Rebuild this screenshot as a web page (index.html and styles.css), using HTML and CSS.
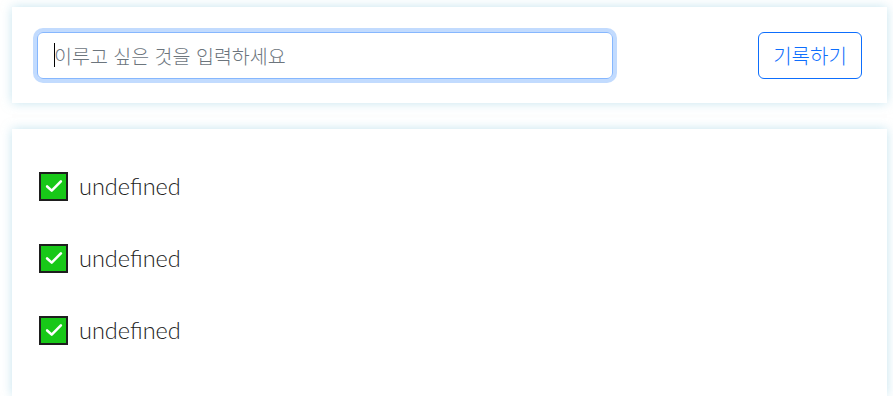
FILE: index.html
```html
<!DOCTYPE html>
<html lang="ko">
<head>
<meta charset="utf-8">
<link rel="stylesheet" href="styles.css">
</head>
<body>
<div class="page">
  <form class="card entry">
    <div class="field">
      <span class="caret"></span>
      <input class="goal-input" type="text" placeholder="이루고 싶은 것을 입력하세요">
    </div>
    <button class="save-btn" type="button">기록하기</button>
  </form>
  <div class="card list">
    <div class="item">
      <span class="check"><svg viewBox="0 0 24 24" width="22" height="22"><path d="M4.5 12.5l5 4.5 10-10" fill="none" stroke="#fff" stroke-width="2.8" stroke-linecap="round" stroke-linejoin="round"/></svg></span>
      <span class="label">undefined</span>
    </div>
    <div class="item">
      <span class="check"><svg viewBox="0 0 24 24" width="22" height="22"><path d="M4.5 12.5l5 4.5 10-10" fill="none" stroke="#fff" stroke-width="2.8" stroke-linecap="round" stroke-linejoin="round"/></svg></span>
      <span class="label">undefined</span>
    </div>
    <div class="item">
      <span class="check"><svg viewBox="0 0 24 24" width="22" height="22"><path d="M4.5 12.5l5 4.5 10-10" fill="none" stroke="#fff" stroke-width="2.8" stroke-linecap="round" stroke-linejoin="round"/></svg></span>
      <span class="label">undefined</span>
    </div>
  </div>
</div>
</body>
</html>
```
FILE: styles.css
```css
html, body {
  margin: 0;
  padding: 0;
  background: #fff;
}
body {
  font-family: "Noto Sans CJK KR", "Noto Sans", sans-serif;
}
.page {
  padding: 7px 6px 0 12px;
  display: flex;
  flex-direction: column;
  gap: 26px;
}
.card {
  background: #fff;
  box-shadow: 0 0 10px rgba(150, 205, 225, 0.55);
}
.entry {
  margin: 0;
  height: 96px;
  box-sizing: border-box;
  padding: 25px 25px 0 25px;
  display: flex;
  justify-content: space-between;
  align-items: flex-start;
}
.field {
  position: relative;
  width: 576px;
  height: 47px;
  box-sizing: border-box;
  border: 1px solid #86b7fe;
  border-radius: 6px;
  box-shadow: 0 0 0 4px rgba(13, 110, 253, 0.25);
  display: flex;
  align-items: center;
  padding-left: 16px;
}
.caret {
  position: absolute;
  left: 16px;
  top: 10px;
  width: 1px;
  height: 24px;
  background: #000;
}
.goal-input {
  border: 0;
  outline: none;
  padding: 0;
  width: 100%;
  font-family: "Noto Sans CJK KR", sans-serif;
  font-size: 19.5px;
  font-weight: 300;
  color: #212529;
  background: transparent;
}
.goal-input::placeholder {
  color: #6c757d;
}
.save-btn {
  width: 104px;
  height: 47px;
  border: 1px solid #0d6efd;
  border-radius: 6px;
  background: #fff;
  color: #0d6efd;
  font-family: "Noto Sans CJK KR", sans-serif;
  font-size: 20px;
  font-weight: 300;
  padding: 0;
}
.list {
  height: 267px;
  box-sizing: border-box;
  padding: 21px 27px 0 27px;
  display: flex;
  flex-direction: column;
}
.item {
  height: 72px;
  display: flex;
  align-items: center;
  gap: 11px;
}
.check {
  width: 29px;
  height: 29px;
  box-sizing: border-box;
  border: 2px solid #1e1e1e;
  background: #18c818;
  display: flex;
  align-items: center;
  justify-content: center;
}
.check svg {
  display: block;
}
.label {
  font-family: Lato, "Noto Sans", sans-serif;
  font-size: 23.5px;
  font-weight: 300;
  color: #222;
}
```
